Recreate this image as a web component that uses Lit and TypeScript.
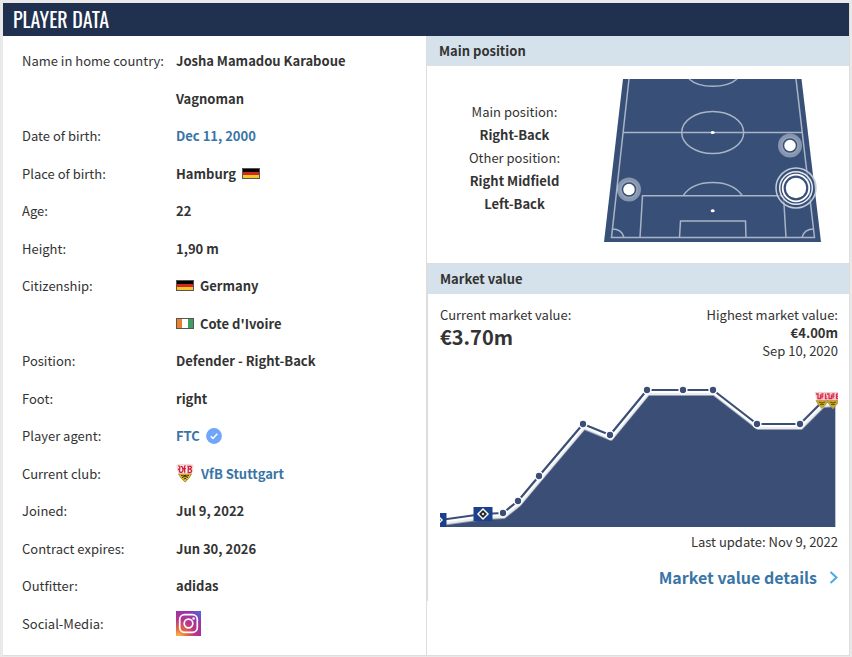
import { LitElement, html, svg, css } from "lit";
import { customElement } from "lit/decorators.js";

type Point = [number, number];

const POINTS: Point[] = [
  [440, 520], [483, 514], [503, 513], [518, 501], [539, 476], [583, 424], [610, 435],
  [647, 390], [683, 390], [713, 390], [757, 424], [800, 424], [822, 402], [835, 401],
];
const DOTS = POINTS.slice(2, 12);

const crestShapes = svg`
  <path d="M1 1 Q9 -1 17 1 Q18 9 9.500 18.500 Q0 9 1 1Z" fill="#fbe9ea" stroke="#e3c7c5" stroke-width=".6"/>
  <path d="M2.500 10 H15.500 Q14 14 9 18 Q4 14 2.500 10Z" fill="#e3c32c" stroke="#8d7420" stroke-width=".6"/>
  <path d="M5 11.500 L8 12 L9 11 L10 12 L13 11.500 M6 13.500 L9 12.500 L12 13.500 M8 15.500 L9 14 L10.500 15.500" fill="none" stroke="#3c3210" stroke-width="1"/>
  <path d="M2.200 2.200 Q4 1.500 3.800 4 L3.500 7 Q3.500 8.600 5.500 8.400 Q7.500 7.500 6.800 4.500 Q6.200 2 4.800 2.600 M2 5.500 L4 5 M9.600 1.600 Q8.200 1.800 8.500 4 L8.700 8.800 M7.400 4.600 H10 M11.400 2 Q12.600 2 12.300 4 L12.200 8.500 Q15.500 9 15.600 6.900 Q15.300 5.200 13 5.200 Q15.800 4.600 15.400 3 Q14.500 1.700 12.800 2.600" fill="none" stroke="#d3203a" stroke-width="1.300"/>`;

const crest = html`<svg class="crest" viewBox="0 0 19 19" aria-hidden="true">${crestShapes}</svg>`;

const smallCrest = svg`
  <path d="M0 0 H14 Q14 8 7 17 Q0 8 0 0Z" fill="#f8ccd2"/>
  <path d="M1 8.500 H13 Q12 12 7 16.500 Q2 12 1 8.500Z" fill="#c9a91f" stroke="#a98a4a" stroke-width=".6"/>
  <path d="M4 10 L7 11 L10 10 M5 12.500 H9" fill="none" stroke="#6d5a14" stroke-width="1.200"/>
  <path d="M1 2 H3 V6.500 H5.500 V2.500 M7 6.500 V2 H8.500 M6.500 4.200 H8.500 M10.500 2 V6.500 H13 V4.300 H10.500 M10.500 2 H13" fill="none" stroke="#d8304a" stroke-width="1.300"/>`;

const germany = html`<svg class="flag" viewBox="0 0 18 11" role="img" aria-label="Germany">
  <rect width="18" height="4" fill="#000" /><rect y="4" width="18" height="3" fill="#d02a1e" />
  <rect y="7" width="18" height="4" fill="#f6c52c" />
  <rect x=".5" y=".5" width="17" height="10" fill="none" stroke="#555" /></svg>`;

const ivoryCoast = html`<svg class="flag" viewBox="0 0 18 11" role="img" aria-label="Cote d'Ivoire">
  <rect width="18" height="11" fill="#fff" /><rect width="6" height="11" fill="#e8822f" />
  <rect x="12" width="6" height="11" fill="#3f9f63" />
  <rect x=".5" y=".5" width="17" height="10" fill="none" stroke="#555" /></svg>`;

const verified = html`<svg class="verified" viewBox="0 0 16 16" aria-hidden="true">
  <circle cx="8" cy="8" r="7.900" fill="#6fa5fb" />
  <path d="M4.700 8.300 L7 10.400 L11.300 5.700" fill="none" stroke="#fff" stroke-width="1.500" /></svg>`;

const instagram = html`<svg class="insta" viewBox="0 0 25 25" aria-hidden="true">
  <defs>
    <radialGradient id="ig" cx="0.1" cy="1.05" r="1.15">
      <stop offset="0" stop-color="#fbc55a" /><stop offset=".3" stop-color="#e4683f" />
      <stop offset=".6" stop-color="#b9358a" /><stop offset="1" stop-color="#9133ae" />
    </radialGradient>
    <radialGradient id="igb" cx="1" cy="0" r=".5">
      <stop offset="0" stop-color="#5568d8" /><stop offset="1" stop-color="#5568d8" stop-opacity="0" />
    </radialGradient>
  </defs>
  <rect width="25" height="25" fill="url(#ig)" /><rect width="25" height="25" fill="url(#igb)" />
  <g fill="none" stroke="#fff" stroke-width="1.700">
    <rect x="3.700" y="3.700" width="17.600" height="17.600" rx="4.800" /><circle cx="12.500" cy="12.500" r="4.300" />
  </g>
  <circle cx="17.600" cy="7.500" r="1.200" fill="#fff" /></svg>`;

const spot = (x: number, y: number) => svg`
  <circle cx=${x} cy=${y} r="12" fill="#fff" fill-opacity=".4"/>
  <circle cx=${x} cy=${y} r="9" fill="#fff" fill-opacity=".12"/>
  <circle cx=${x} cy=${y} r="6.500" fill="#fff" stroke="#385078" stroke-width="1.500"/>`;

const pitch = html`<svg class="pitch" viewBox="604 79 217 163" role="img" aria-label="Positions on the pitch">
  <path d="M623 79 H801.500 L821 242 H604Z" fill="#385078" />
  <g fill="none" stroke="#a9b4c6" stroke-width="1.500">
    <path d="M629 79 L611.500 237.500 H814.500 L796 79" />
    <path d="M623 132.500 H802" />
    <ellipse cx="712.700" cy="132.500" rx="31" ry="21" />
    <path d="M689 79 Q697 86.300 712.700 86.300 Q729 86.300 737 79" />
    <path d="M640 237.500 L642.500 195.800 H783.500 L786 237.500" />
    <path d="M683 195.800 Q692 182.500 712.700 182.500 Q733 182.500 742.500 195.800" />
    <path d="M679.500 237.500 L680.500 221 H745.500 L746 237.500" />
    <path d="M612 229 Q622 229 624 237.500 M814 229 Q804 229 802 237.500" />
  </g>
  <g fill="#fff"><ellipse cx="712.700" cy="132.500" rx="2" ry="1.500" /><ellipse cx="712.700" cy="210.700" rx="2" ry="1.500" /></g>
  ${spot(790, 145.5)}${spot(629, 189.5)}
  <circle cx="796" cy="188" r="20" fill="#385078" fill-opacity=".6" stroke="#c3cbd8" stroke-width="1.500" />
  <circle cx="796" cy="188" r="16.300" fill="none" stroke="#e6eaf0" stroke-width="1.500" />
  <circle cx="796" cy="188" r="13.300" fill="none" stroke="#fff" stroke-width="1.800" />
  <circle cx="796" cy="188" r="10.200" fill="#fff" />
</svg>`;

const line = POINTS.map((p) => p.join(" ")).join(" L");

const hsv = (x: number, y: number) => svg`
  <rect x=${x - 9.5} y=${y - 7} width="19" height="14" fill="#1c418c"/>
  <path d="M${x} ${y - 6} l6 6 l-6 6 l-6 -6Z" fill="#fff"/>
  <path d="M${x} ${y - 4} l4 4 l-4 4 l-4 -4Z" fill="#222"/>
  <circle cx=${x} cy=${y} r="1.300" fill="#d9d6c8"/>`;

const chart = html`<svg class="chart" viewBox="440 380 398 147" role="img" aria-label="Market value over time">
  <path d="M${line} V527 H440Z" fill="#3b4f76" />
  <path d="M835.500 404 V527" stroke="#b9c4d5" />
  <g fill="none" stroke-linejoin="round">
    <path d="M${line}" transform="translate(1 4)" stroke="#fff" stroke-opacity=".45" stroke-width="4" />
    <path d="M${line}" transform="translate(1 3)" stroke="#fff" stroke-opacity=".8" stroke-width="4" />
    <path d="M${line}" stroke="#fff" stroke-width="6" />
    <path d="M${line}" stroke="#3b4f76" stroke-width="2.200" />
  </g>
  <g fill="#3b4f76" stroke="#fff" stroke-width="1.500">
    ${DOTS.map(([x, y]) => svg`<circle cx=${x} cy=${y} r="3.900"/>`)}
  </g>
  ${hsv(437, 520)}${hsv(483, 514)}
  <g transform="translate(815 392)">${smallCrest}</g>
  <g transform="translate(826 392)">${smallCrest}</g>
</svg>`;

const FACTS: [string, unknown][] = [
  ["Name in home country:", "Josha Mamadou Karaboue Vagnoman"],
  ["Date of birth:", html`<a href="#born">Dec 11, 2000</a>`],
  ["Place of birth:", html`<span class="pair">Hamburg ${germany}</span>`],
  ["Age:", "22"],
  ["Height:", "1,90 m"],
  ["Citizenship:", html`<span class="pair">${germany} Germany</span><span class="pair">${ivoryCoast} Cote d'Ivoire</span>`],
  ["Position:", "Defender - Right-Back"],
  ["Foot:", "right"],
  ["Player agent:", html`<span class="pair"><a href="#agent">FTC</a> ${verified}</span>`],
  ["Current club:", html`<a class="pair" href="#club">${crest} VfB Stuttgart</a>`],
  ["Joined:", "Jul 9, 2022"],
  ["Contract expires:", "Jun 30, 2026"],
  ["Outfitter:", "adidas"],
  ["Social-Media:", html`<a class="pair" href="#instagram" aria-label="Instagram">${instagram}</a>`],
];

@customElement("app-root")
export class AppRoot extends LitElement {
  static styles = css`
    :host {
      display: block;
      box-sizing: border-box;
      min-height: 100vh;
      padding: 3px 2px 1px 3px;
      background: #e9e9e9;
      color: #333;
      font-family: "Noto Sans CJK SC", "Open Sans", sans-serif;
      font-size: 13px;
      line-height: 18px;
    }
    a { color: #3875a6; text-decoration: none; }
    svg { display: block; flex: none; }
    h2, h3, p, dl, dd { margin: 0; }
    .card { background: #fff; border: solid #ddd; border-width: 0 1px 1px 0; }
    .title {
      padding: 0 10px;
      background: #20304f;
      color: #fff;
      font: 400 20px/33px "Liberation Sans Narrow", "Oswald", "DejaVu Sans Condensed", sans-serif;
      text-transform: uppercase;
    }
    .columns { display: grid; grid-template-columns: 1fr 1fr; }
    .facts {
      padding: 6px 16px 13px 19px;
      font-size: 15px;
      line-height: 2.5em;
    }
    .row { display: grid; grid-template-columns: 154px 1fr; }
    .row dt, .row dd { font-size: 13px; }
    .row dt { white-space: nowrap; }
    .row dd { font-weight: 700; }
    .pair { display: flex; align-items: center; gap: 6px; }
    .flag { width: 18px; height: 11px; }
    .verified { width: 16px; height: 16px; }
    .crest { width: 19px; height: 19px; }
    .insta { width: 25px; height: 25px; margin: 6px 0; }
    .side { border-left: 1px solid #ddd; }
    .heading {
      padding: 0 12px;
      background: #d5e2eb;
      font-size: 13px;
      font-weight: 700;
      line-height: 30px;
    }
    .positions { display: flex; padding: 13px 28px 21px 0; }
    .roles { flex: 1; padding: 21px 2px 0 0; text-align: center; line-height: 23px; }
    .pitch { width: 217px; height: 163px; }
    .market { border-left: 1px solid #ddd; padding-bottom: 11px; }
    .market .heading { border-top: 1px solid #dcdfe2; }
    .values { display: flex; justify-content: space-between; padding: 12px 11px 0 12px; }
    .right { text-align: right; }
    .amount { font-size: 20px; font-weight: 700; line-height: 26px; }
    .chart { width: 100%; height: auto; }
    .graph { padding: 20px 11px 0 12px; }
    .updated { padding: 6px 11px 0; text-align: right; }
    .details { display: flex; justify-content: flex-end; padding: 13px 11px 0; }
    .more { display: flex; align-items: center; gap: 12px; font-size: 16px; font-weight: 700; line-height: 26px; }
    .arrow { width: 9px; height: 13px; }
  `;

  render() {
    return html`<section class="card">
      <h2 class="title">Player data</h2>
      <div class="columns">
        <dl class="facts">
          ${FACTS.map(([label, value]) => html`<div class="row"><dt>${label}</dt><dd>${value}</dd></div>`)}
        </dl>
        <div class="side">
          <h3 class="heading">Main position</h3>
          <div class="positions">
            <div class="roles">
              <p>Main position:</p>
              <p><b>Right-Back</b></p>
              <p>Other position:</p>
              <p><b>Right Midfield</b></p>
              <p><b>Left-Back</b></p>
            </div>
            ${pitch}
          </div>
          <div class="market">
            <h3 class="heading">Market value</h3>
            <div class="values">
              <div><p>Current market value:</p><p class="amount">€3.70m</p></div>
              <div class="right"><p>Highest market value:</p><p><b>€4.00m</b></p><p>Sep 10, 2020</p></div>
            </div>
            <div class="graph">${chart}</div>
            <p class="updated">Last update: Nov 9, 2022</p>
            <div class="details">
              <a class="more" href="#details">Market value details
                <svg class="arrow" viewBox="0 0 9 13" aria-hidden="true">
                  <path d="M1.500 1 L7.500 6.500 L1.500 12" fill="none" stroke="#4aa9e8" stroke-width="2" />
                </svg></a>
            </div>
          </div>
        </div>
      </div>
    </section>`;
  }
}
